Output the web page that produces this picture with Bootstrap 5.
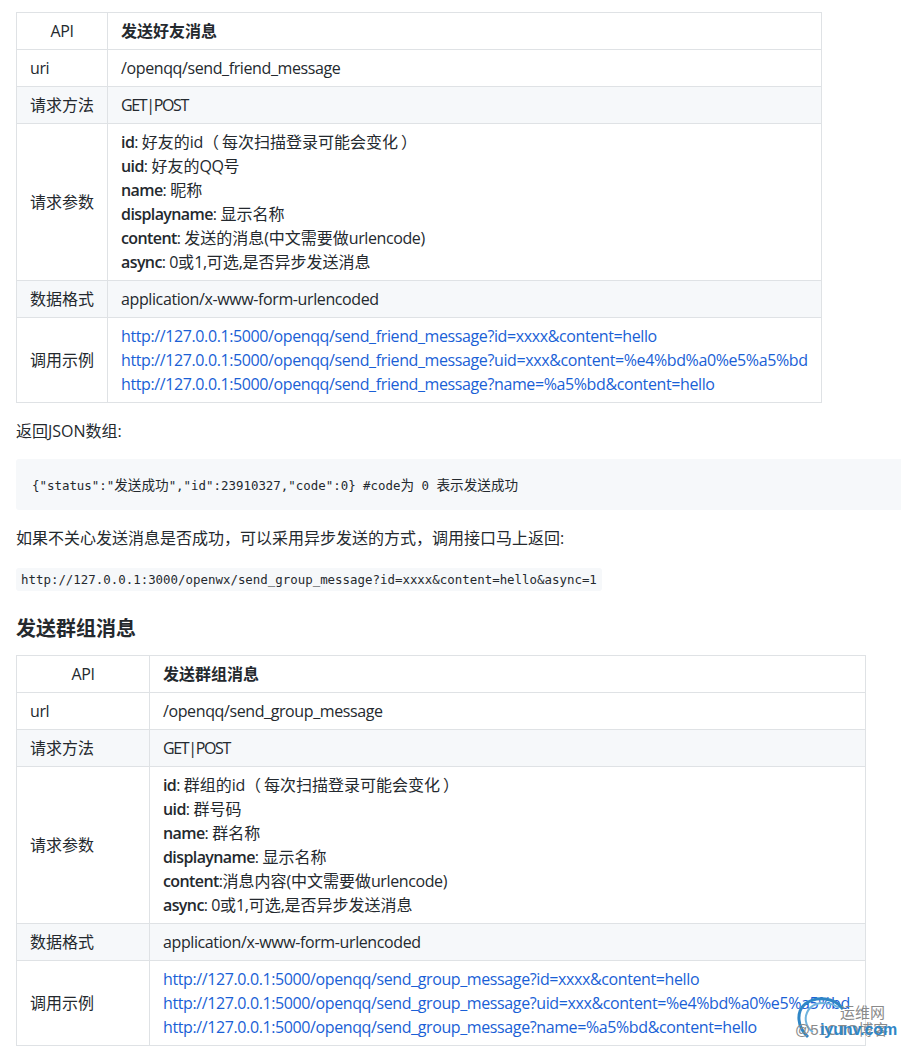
<!DOCTYPE html>
<html lang="zh">
<head>
<meta charset="utf-8">
<title>API</title>
<link href="https://cdn.jsdelivr.net/npm/bootstrap@5.3.0/dist/css/bootstrap.min.css" rel="stylesheet">
<style>
html,body{height:1046px;overflow:hidden}
body{font-family:"Open Sans","Noto Sans CJK SC",sans-serif;font-size:16px;line-height:24px;color:#24292e;background:#fff;letter-spacing:-.39px}
.doc-wrap{padding:12px 0 0 16px;position:relative}
.api-table{margin:0;border-collapse:collapse;color:#24292e;--bs-table-border-color:#dfe2e5;--bs-table-bg:transparent}
.table-one{width:806px}
.table-two{width:850px}
.api-table td,.api-table th{border:1px solid #dfe2e5;padding:6px 13px;vertical-align:middle;font-weight:400;white-space:nowrap;box-shadow:none}
.api-table .head-left{text-align:center}
.api-table .head-right{font-weight:700;letter-spacing:0}
.api-table .alt-row>td{background:#f6f8fa}
.api-table a{color:#1a5fd6;text-decoration:none}
.api-table b{font-weight:600;letter-spacing:-.6px}
.zh{letter-spacing:0}
.zh-mid{font-family:"Noto Sans CJK TC",sans-serif;letter-spacing:0;line-height:1}
.paren-open{letter-spacing:3px}
.paren-close{margin-left:3px}
.tight{letter-spacing:-1.35px}
.first-col-a{width:91px}
.first-col-b{width:133px}
.note-text{margin:16px 0 16px;letter-spacing:0}
.code-block{background:#f6f8fa;border-radius:3px;margin:16px -16px 16px 0;height:51px;padding:0 16px;display:flex;align-items:center;overflow:hidden}
.code-block,.code-inline{font-family:"DejaVu Sans Mono","Noto Sans CJK SC",monospace;font-size:12.43px;letter-spacing:0;color:#24292e}
.cjk-bit{font-family:"Noto Sans CJK SC",sans-serif;font-size:13.6px}
.code-inline{display:inline-block;background:#f6f8fa;border-radius:3px;padding:1px 5px 0;line-height:22px;white-space:nowrap}
.inline-wrap{margin:0;padding-top:1px;line-height:22px}
.sub-title{font-size:20px;font-weight:700;line-height:30px;margin:22px 0 12px;letter-spacing:0;font-family:"Noto Sans CJK SC",sans-serif}
.stamp{position:absolute;left:785px;top:995px;width:116px;height:51px;pointer-events:none}
.stamp svg{position:absolute;left:10px;top:0}
.stamp-a{position:absolute;left:55px;top:8px;font-size:15px;line-height:18px;color:#8a8a8a;letter-spacing:0;font-family:"Noto Sans CJK SC",sans-serif}
.stamp-b{position:absolute;left:10px;top:26px;font-size:15px;line-height:18px;color:#8a8a8a;letter-spacing:0;font-family:"Liberation Sans","Noto Sans CJK SC",sans-serif;white-space:nowrap}
.stamp-c{position:absolute;left:35px;top:26px;font-size:16px;line-height:18px;color:#2f86c6;font-weight:700;letter-spacing:-.1px;font-family:"Liberation Sans",sans-serif}
</style>
</head>
<body>
<div class="doc-wrap">
<table class="table api-table table-one">
<tbody>
<tr><td class="head-left first-col-a">API</td><td class="head-right">发送好友消息</td></tr>
<tr><td>uri</td><td>/openqq/send_friend_message</td></tr>
<tr class="alt-row"><td class="zh">请求方法</td><td class="tight">GET|POST</td></tr>
<tr><td class="zh">请求参数</td><td><b>id</b>: <span class="zh">好友的</span>id<span class="zh-mid paren-open">（</span><span class="zh">每次扫描登录可能会变化</span><span class="zh-mid paren-close">）</span><br><b>uid</b>: <span class="zh">好友的</span>QQ<span class="zh">号</span><br><b>name</b>: <span class="zh">昵称</span><br><b>displayname</b>: <span class="zh">显示名称</span><br><b>content</b>: <span class="zh">发送的消息</span>(<span class="zh">中文需要做</span>urlencode)<br><b>async</b>: 0<span class="zh">或</span>1,<span class="zh">可选</span>,<span class="zh">是否异步发送消息</span></td></tr>
<tr class="alt-row"><td class="zh">数据格式</td><td>application/x-www-form-urlencoded</td></tr>
<tr><td class="zh">调用示例</td><td><a href="#">http://127.0.0.1:5000/openqq/send_friend_message?id=xxxx&amp;content=hello</a><br><a href="#">http://127.0.0.1:5000/openqq/send_friend_message?uid=xxx&amp;content=%e4%bd%a0%e5%a5%bd</a><br><a href="#">http://127.0.0.1:5000/openqq/send_friend_message?name=%a5%bd&amp;content=hello</a></td></tr>
</tbody>
</table>
<p class="note-text">返回JSON数组:</p>
<div class="code-block"><span>{"status":"<span class="cjk-bit">发送成功</span>","id":23910327,"code":0} #code<span class="cjk-bit">为</span> 0 <span class="cjk-bit">表示发送成功</span></span></div>
<p class="note-text">如果不关心发送消息是否成功<span class="zh-mid">，</span>可以采用异步发送的方式<span class="zh-mid">，</span>调用接口马上返回:</p>
<div class="inline-wrap"><span class="code-inline">http://127.0.0.1:3000/openwx/send_group_message?id=xxxx&amp;content=hello&amp;async=1</span></div>
<h2 class="sub-title">发送群组消息</h2>
<table class="table api-table table-two">
<tbody>
<tr><td class="head-left first-col-b">API</td><td class="head-right">发送群组消息</td></tr>
<tr><td>url</td><td>/openqq/send_group_message</td></tr>
<tr class="alt-row"><td class="zh">请求方法</td><td class="tight">GET|POST</td></tr>
<tr><td class="zh">请求参数</td><td><b>id</b>: <span class="zh">群组的</span>id<span class="zh-mid paren-open">（</span><span class="zh">每次扫描登录可能会变化</span><span class="zh-mid paren-close">）</span><br><b>uid</b>: <span class="zh">群号码</span><br><b>name</b>: <span class="zh">群名称</span><br><b>displayname</b>: <span class="zh">显示名称</span><br><b>content</b>:<span class="zh">消息内容</span>(<span class="zh">中文需要做</span>urlencode)<br><b>async</b>: 0<span class="zh">或</span>1,<span class="zh">可选</span>,<span class="zh">是否异步发送消息</span></td></tr>
<tr class="alt-row"><td class="zh">数据格式</td><td>application/x-www-form-urlencoded</td></tr>
<tr><td class="zh">调用示例</td><td><a href="#">http://127.0.0.1:5000/openqq/send_group_message?id=xxxx&amp;content=hello</a><br><a href="#">http://127.0.0.1:5000/openqq/send_group_message?uid=xxx&amp;content=%e4%bd%a0%e5%a5%bd</a><br><a href="#">http://127.0.0.1:5000/openqq/send_group_message?name=%a5%bd&amp;content=hello</a></td></tr>
</tbody>
</table>
</div>
<div class="stamp">
<svg width="60" height="46" viewBox="0 0 60 46" fill="none"><path d="M48 14C40 3 22 0 10 9C1 17 2 32 13 42" stroke="#2f86c6" stroke-width="3"/><path d="M44 13C36 7 22 6 15 13C8 21 10 32 18 37" stroke="#6fb3de" stroke-width="2"/></svg>
<span class="stamp-b">@51CTO博客</span>
<span class="stamp-a">运维网</span>
<span class="stamp-c">iyunv.com</span>
</div>
<script src="https://cdn.jsdelivr.net/npm/bootstrap@5.3.0/dist/js/bootstrap.bundle.min.js"></script>
</body>
</html>
